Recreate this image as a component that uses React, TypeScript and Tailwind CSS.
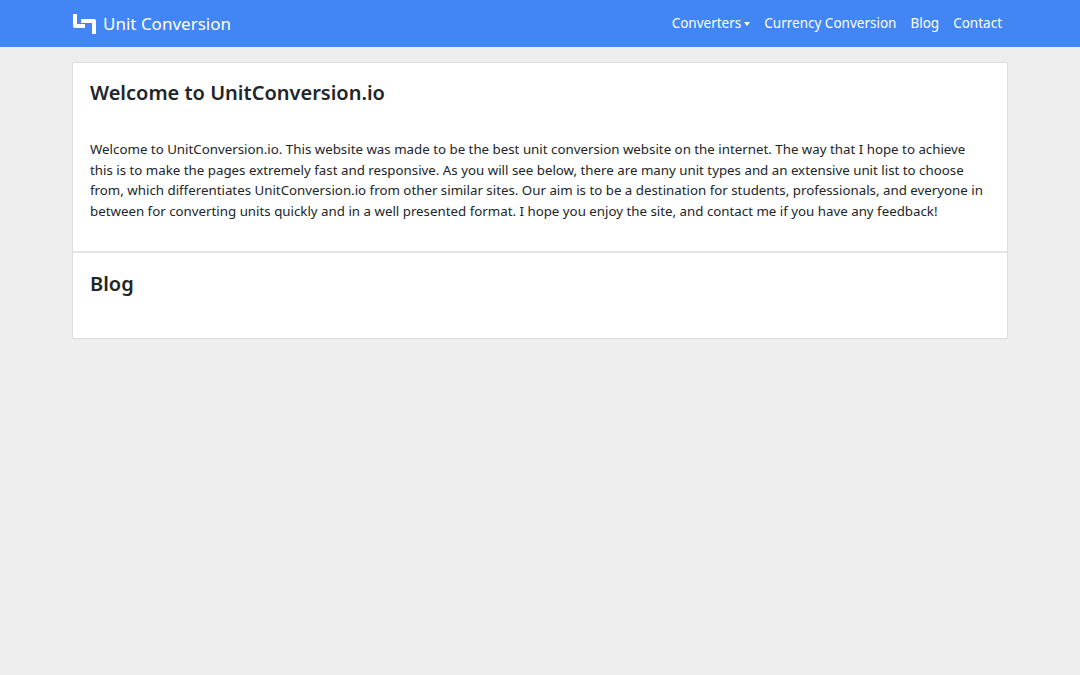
export default function App() {
  return (
    <div className="min-h-[675px] bg-[#eeeeee] text-[#212529]" style={{ fontFamily: '"Noto Sans", "Open Sans", sans-serif' }}>
      <nav className="h-[47px] bg-[#4285f4] flex items-center">
        <div className="w-[936px] mx-auto flex items-center justify-between">
          <a className="flex items-center gap-[6px] text-white text-[17px]">
            <svg width="25" height="22" viewBox="0 0 25 22" fill="none" stroke="white" strokeWidth="4" strokeLinejoin="round">
              <path d="M3 1 V13 H13" />
              <path d="M9 8 H22 V21" />
            </svg>
            Unit Conversion
          </a>
          <div className="flex items-center gap-[14px] text-white text-[13.5px] mr-[6px]">
            <span className="flex items-center gap-[3px]">Converters<span className="border-t-[4px] border-t-white border-x-[3.5px] border-x-transparent mt-[1px]" /></span>
            <span>Currency Conversion</span>
            <span>Blog</span>
            <span>Contact</span>
          </div>
        </div>
      </nav>
      <div className="w-[936px] mx-auto mt-[15px] bg-white border border-[#dddddd]">
        <section className="px-[17px] pt-[16px] pb-[30px] border-b-2 border-[#e5e5e5]">
          <h1 className="text-[20px] font-semibold leading-[28px] mb-[32px]">Welcome to UnitConversion.io</h1>
          <p className="text-[13.3px] leading-[20.5px]">
            Welcome to UnitConversion.io. This website was made to be the best unit conversion website on the internet. The way that I hope to achieve this is to make the pages extremely fast and responsive. As you will see below, there are many unit types and an extensive unit list to choose from, which differentiates UnitConversion.io from other similar sites. Our aim is to be a destination for students, professionals, and everyone in between for converting units quickly and in a well presented format. I hope you enjoy the site, and contact me if you have any feedback!
          </p>
        </section>
        <section className="px-[17px] pt-[17px] pb-[40px]">
          <h2 className="text-[20px] font-semibold leading-[28px]">Blog</h2>
        </section>
      </div>
    </div>
  )
}
